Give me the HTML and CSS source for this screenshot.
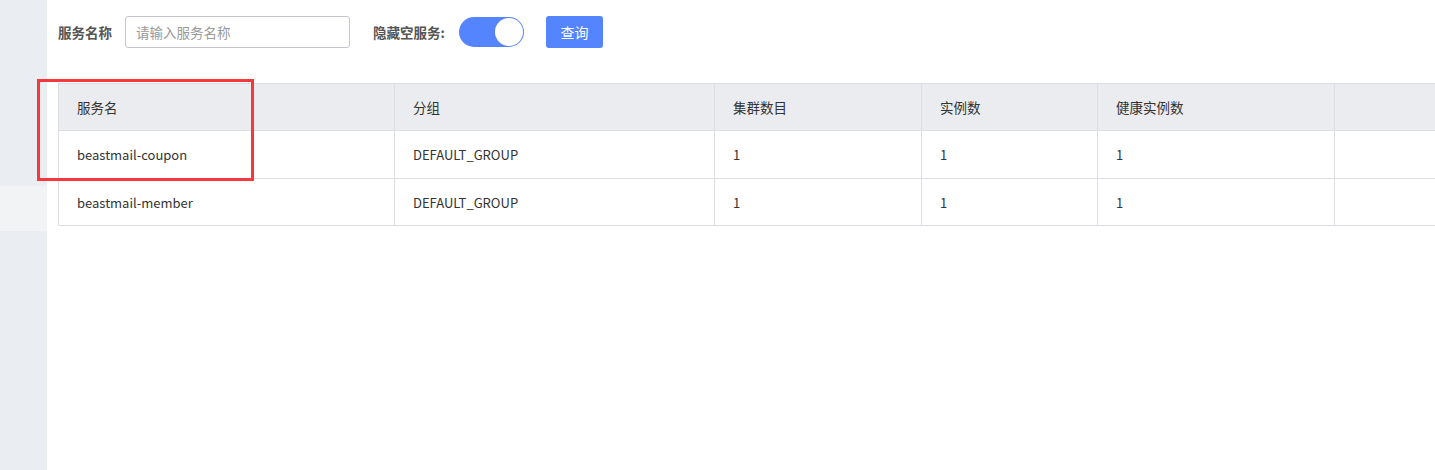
FILE: index.html
```html
<!DOCTYPE html>
<html lang="zh-CN">
<head>
<meta charset="utf-8">
<title>服务列表</title>
<link rel="stylesheet" href="styles.css">
</head>
<body>
<div class="layout">
  <aside class="sidebar">
    <div class="side-item"></div>
  </aside>
  <main class="main">
    <div class="filter">
      <span class="label">服务名称</span>
      <input class="input" type="text" placeholder="请输入服务名称">
      <span class="label label-hide">隐藏空服务:</span>
      <span class="switch"><span class="knob"></span></span>
      <button class="btn">查询</button>
    </div>
    <table class="table">
      <colgroup>
        <col style="width:336px">
        <col style="width:320px">
        <col style="width:207px">
        <col style="width:176px">
        <col style="width:237px">
        <col style="width:160px">
      </colgroup>
      <thead>
        <tr><th>服务名</th><th>分组</th><th>集群数目</th><th>实例数</th><th>健康实例数</th><th></th></tr>
      </thead>
      <tbody>
        <tr class="row-first"><td>beastmail-coupon</td><td>DEFAULT_GROUP</td><td>1</td><td>1</td><td>1</td><td></td></tr>
        <tr><td>beastmail-member</td><td>DEFAULT_GROUP</td><td>1</td><td>1</td><td>1</td><td></td></tr>
      </tbody>
    </table>
  </main>
</div>
<div class="highlight"></div>
</body>
</html>
```
FILE: styles.css
```css
html, body {
  margin: 0;
  padding: 0;
  background: #fff;
  overflow: hidden;
}
body {
  font-family: "Noto Sans CJK SC", "Liberation Sans", sans-serif;
  font-size: 14px;
  color: #333;
  width: 1435px;
  height: 470px;
  position: relative;
}
.layout {
  display: flex;
  height: 470px;
}
.sidebar {
  width: 47px;
  flex: 0 0 47px;
  background: #eaedf1;
  padding-top: 186px;
  box-sizing: border-box;
}
.side-item {
  height: 45px;
  background: #f2f3f5;
}
.main {
  flex: 1;
  padding: 16px 0 0 11px;
  overflow: hidden;
}
.filter {
  display: flex;
  align-items: center;
  height: 32px;
}
.label {
  font-weight: bold;
  color: #555;
  font-size: 13.5px;
}
.input {
  margin-left: 13px;
  width: 225px;
  height: 32px;
  box-sizing: border-box;
  border: 1px solid #c4c6cf;
  border-radius: 3px;
  padding: 0 10px;
  font-family: inherit;
  font-size: 13.5px;
  outline: none;
}
.input::placeholder {
  color: #999;
}
.label-hide {
  margin-left: 23px;
}
.switch {
  margin-left: 14px;
  width: 65px;
  height: 30px;
  border-radius: 15px;
  background: #5584ff;
  display: flex;
  align-items: center;
  justify-content: flex-end;
  padding: 0 1px;
  box-sizing: border-box;
}
.knob {
  width: 28px;
  height: 28px;
  border-radius: 50%;
  background: #fff;
}
.btn {
  margin-left: 22px;
  width: 57px;
  height: 32px;
  border: none;
  border-radius: 3px;
  background: #5584ff;
  color: #fff;
  font-family: inherit;
  font-size: 14px;
  padding: 0;
}
.table {
  margin-top: 35px;
  border-collapse: collapse;
  table-layout: fixed;
  width: 1436px;
  font-size: 13px;
}
.table th, .table td {
  border: 1px solid #dcdee3;
  height: 47px;
  padding: 0 18px;
  text-align: left;
  font-weight: normal;
  box-sizing: border-box;
  white-space: nowrap;
}
.table th {
  font-size: 13.5px;
  background: #ebecf0;
  color: #333;
}
.table .row-first td {
  height: 48px;
}
.table td {
  background: #fff;
}
.highlight {
  position: absolute;
  left: 37px;
  top: 79px;
  width: 217px;
  height: 102px;
  box-sizing: border-box;
  border: 3px solid #f5383b;
}
```
